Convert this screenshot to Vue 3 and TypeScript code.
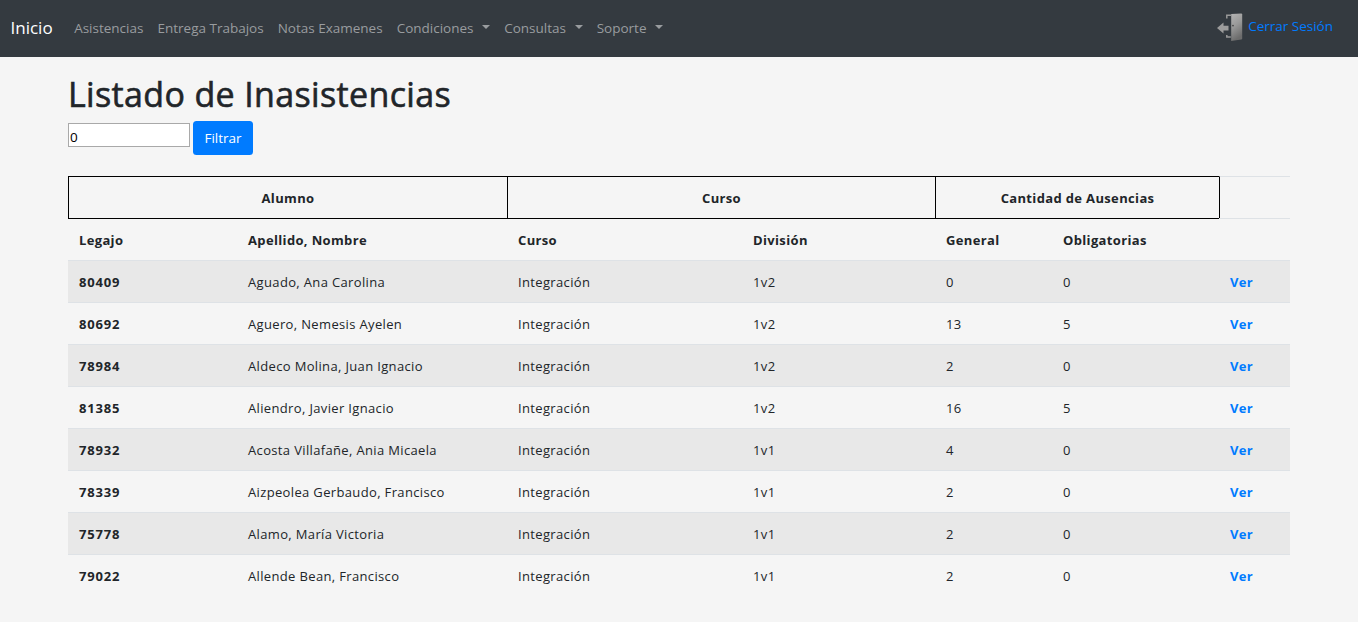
<script setup lang="ts">
import { ref } from 'vue'

interface NavItem { label: string; menu?: boolean }
interface Row { legajo: string; nombre: string; division: string; general: number; obligatorias: number }

const filtro = ref('0')

const nav: NavItem[] = [
  { label: 'Asistencias' },
  { label: 'Entrega Trabajos' },
  { label: 'Notas Examenes' },
  { label: 'Condiciones', menu: true },
  { label: 'Consultas', menu: true },
  { label: 'Soporte', menu: true },
]

const rows: Row[] = [
  { legajo: '80409', nombre: 'Aguado, Ana Carolina', division: '1v2', general: 0, obligatorias: 0 },
  { legajo: '80692', nombre: 'Aguero, Nemesis Ayelen', division: '1v2', general: 13, obligatorias: 5 },
  { legajo: '78984', nombre: 'Aldeco Molina, Juan Ignacio', division: '1v2', general: 2, obligatorias: 0 },
  { legajo: '81385', nombre: 'Aliendro, Javier Ignacio', division: '1v2', general: 16, obligatorias: 5 },
  { legajo: '78932', nombre: 'Acosta Villafañe, Ania Micaela', division: '1v1', general: 4, obligatorias: 0 },
  { legajo: '78339', nombre: 'Aizpeolea Gerbaudo, Francisco', division: '1v1', general: 2, obligatorias: 0 },
  { legajo: '75778', nombre: 'Alamo, María Victoria', division: '1v1', general: 2, obligatorias: 0 },
  { legajo: '79022', nombre: 'Allende Bean, Francisco', division: '1v1', general: 2, obligatorias: 0 },
]
</script>

<template>
  <div class="page">
    <nav class="navbar">
      <a class="brand">Inicio</a>
      <ul class="links">
        <li v-for="item in nav" :key="item.label" :class="{ menu: item.menu }">{{ item.label }}</li>
      </ul>
      <a class="logout">
        <svg width="28" height="30" viewBox="0 0 28 30">
          <defs>
            <linearGradient id="door" x1="0" y1="0" x2="0.3" y2="1">
              <stop offset="0" stop-color="#b4b4b4" />
              <stop offset="0.5" stop-color="#999" />
              <stop offset="1" stop-color="#6c6c6c" />
            </linearGradient>
          </defs>
          <path d="M15 3.2H10.8V6.5M10.8 23v2h4" fill="none" stroke="#999" stroke-width="1.5" />
          <path d="M15.2 2 25.2 1.4q1 0 1 1V26.4q0 1-1 1.2l-10 1.3z" fill="url(#door)" />
          <path d="M1 16 7.5 10.6v3.2h5v4.6h-5v3z" fill="#9c9c9c" />
          <circle cx="17" cy="13.6" r="0.9" fill="#444" />
        </svg>
        <span>Cerrar Sesión</span>
      </a>
    </nav>
    <main class="content">
      <h1>Listado de Inasistencias</h1>
      <form class="filter" @submit.prevent>
        <input v-model="filtro" type="text" />
        <button type="submit">Filtrar</button>
      </form>
      <table>
        <colgroup>
          <col class="c1" /><col class="c2" /><col class="c3" /><col class="c4" /><col class="c5" /><col class="c6" /><col class="c7" />
        </colgroup>
        <thead>
          <tr class="groups">
            <th colspan="2">Alumno</th>
            <th colspan="2">Curso</th>
            <th colspan="2">Cantidad de Ausencias</th>
            <th class="blank"></th>
          </tr>
          <tr class="heads">
            <th>Legajo</th>
            <th>Apellido, Nombre</th>
            <th>Curso</th>
            <th>División</th>
            <th>General</th>
            <th>Obligatorias</th>
            <th class="blank"></th>
          </tr>
        </thead>
        <tbody>
          <tr v-for="row in rows" :key="row.legajo">
            <th class="legajo">{{ row.legajo }}</th>
            <td>{{ row.nombre }}</td>
            <td>Integración</td>
            <td>{{ row.division }}</td>
            <td>{{ row.general }}</td>
            <td>{{ row.obligatorias }}</td>
            <th><a class="ver">Ver</a></th>
          </tr>
        </tbody>
      </table>
    </main>
  </div>
</template>

<style>
body { background: #f5f5f5; }
</style>

<style scoped>
.page {
  height: 622px;
  overflow: hidden;
  background: #f5f5f5;
  color: #212529;
  font-family: "Open Sans", "Noto Sans", sans-serif;
  font-size: 13.5px;
}
.page * { box-sizing: border-box; }
.navbar {
  display: flex;
  align-items: center;
  height: 57px;
  padding: 0 25px 2px 10.5px;
  background: #343a40;
}
.brand { color: #fff; font-size: 17px; margin-right: 21.5px; }
.links {
  display: flex;
  gap: 14px;
  margin: 0;
  padding: 0;
  list-style: none;
  color: #999c9f;
}
.links li { white-space: nowrap; }
.menu::after {
  content: "";
  display: inline-block;
  margin-left: 8.7px;
  vertical-align: 3.5px;
  border-top: 4px solid;
  border-left: 4px solid transparent;
  border-right: 4px solid transparent;
}
.logout {
  display: flex;
  align-items: center;
  gap: 4px;
  margin: -3px 0 0 auto;
  color: #007bff;
}
.logout svg { display: block; margin-bottom: -2px; }
.content { padding: 16px 68px 0; }
h1 {
  margin: 0;
  height: 48px;
  font-size: 34px;
  line-height: 42px;
  font-weight: 500;
  letter-spacing: 0.35px;
  -webkit-text-stroke: 0.6px #212529;
  white-space: nowrap;
}
.filter { display: flex; align-items: flex-start; gap: 3px; height: 55px; }
.filter input {
  width: 122px;
  height: 24px;
  margin-top: 2px;
  padding: 3px 1px 0;
  border: 1px solid #a9a9a9;
  background: #fff;
  color: #000;
  font: inherit;
}
.filter button {
  width: 60px;
  height: 34px;
  padding: 0;
  border: 0;
  border-radius: 3.5px;
  background: #007bff;
  color: #fff;
  font: inherit;
}
table {
  width: 1222px;
  table-layout: fixed;
  border-collapse: separate;
  border-spacing: 0;
  font-size: 13px;
  letter-spacing: 0.35px;
}
.c1 { width: 169px; }
.c2 { width: 270px; }
.c3 { width: 235px; }
.c4 { width: 193px; }
.c5 { width: 117px; }
.c6 { width: 167px; }
.c7 { width: 71px; }
th, td {
  height: 42px;
  padding: 1px 0 0 11px;
  border-top: 1px solid #dee2e6;
  text-align: left;
  white-space: nowrap;
  line-height: 20px;
}
th { font-weight: 700; }
.legajo { letter-spacing: 0.8px; }
.groups th { padding: 1px 0 0; border-top-color: #000; border-left: 1px solid #000; text-align: center; }
.heads th { border-top-color: #000; }
.groups .blank, .heads .blank { border-top-color: #dee2e6; }
tbody tr:nth-child(odd) { background: #e8e8e8; }
.ver { color: #007bff; }
</style>
